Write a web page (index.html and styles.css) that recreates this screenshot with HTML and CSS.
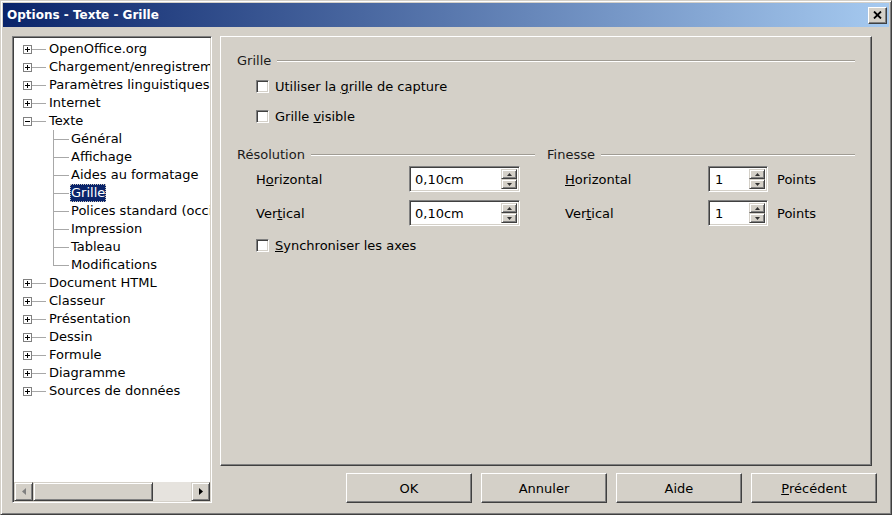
FILE: index.html
```html
<!DOCTYPE html>
<html lang="fr">
<head>
<meta charset="utf-8">
<title>Options - Texte - Grille</title>
<link rel="stylesheet" href="styles.css">
</head>
<body>
<div class="window">
  <div class="titlebar">
    <span class="title">Options - Texte - Grille</span>
    <span class="close"><svg width="9" height="8" viewBox="0 0 9 8"><path d="M1 0.5 L8 7.5 M8 0.5 L1 7.5" stroke="#000" stroke-width="1.8" fill="none"/></svg></span>
  </div>
  <div class="main">
    <div class="tree">
      <ul class="tree-list">
        <li class="node"><span class="exp plus"></span><span class="hl"></span><span class="lbl">OpenOffice.org</span></li>
        <li class="node"><span class="exp plus"></span><span class="hl"></span><span class="lbl">Chargement/enregistrement</span></li>
        <li class="node"><span class="exp plus"></span><span class="hl"></span><span class="lbl">Paramètres linguistiques</span></li>
        <li class="node"><span class="exp plus"></span><span class="hl"></span><span class="lbl">Internet</span></li>
        <li class="node"><span class="exp minus"></span><span class="hl"></span><span class="lbl">Texte</span></li>
        <li class="node child"><span class="vl"></span><span class="lbl">Général</span></li>
        <li class="node child"><span class="vl"></span><span class="lbl">Affichage</span></li>
        <li class="node child"><span class="vl"></span><span class="lbl">Aides au formatage</span></li>
        <li class="node child sel"><span class="vl"></span><span class="lbl">Grille</span></li>
        <li class="node child"><span class="vl"></span><span class="lbl">Polices standard (occidentales)</span></li>
        <li class="node child"><span class="vl"></span><span class="lbl">Impression</span></li>
        <li class="node child"><span class="vl"></span><span class="lbl">Tableau</span></li>
        <li class="node child"><span class="vl last"></span><span class="lbl">Modifications</span></li>
        <li class="node"><span class="exp plus"></span><span class="hl"></span><span class="lbl">Document HTML</span></li>
        <li class="node"><span class="exp plus"></span><span class="hl"></span><span class="lbl">Classeur</span></li>
        <li class="node"><span class="exp plus"></span><span class="hl"></span><span class="lbl">Présentation</span></li>
        <li class="node"><span class="exp plus"></span><span class="hl"></span><span class="lbl">Dessin</span></li>
        <li class="node"><span class="exp plus"></span><span class="hl"></span><span class="lbl">Formule</span></li>
        <li class="node"><span class="exp plus"></span><span class="hl"></span><span class="lbl">Diagramme</span></li>
        <li class="node"><span class="exp plus"></span><span class="hl"></span><span class="lbl">Sources de données</span></li>
      </ul>
      <div class="hscroll">
        <span class="sbtn"><svg width="4" height="7" viewBox="0 0 4 7"><path d="M4 0 L0 3.5 L4 7 Z" fill="#808080"/></svg></span>
        <span class="thumb"></span>
        <span class="track"></span>
        <span class="sbtn"><svg width="4" height="7" viewBox="0 0 4 7"><path d="M0 0 L4 3.5 L0 7 Z" fill="#000"/></svg></span>
      </div>
    </div>
    <div class="right">
      <div class="panel">
        <div class="group-head"><span>Grille</span><span class="rule"></span></div>
        <div class="check first"><span class="cb"></span><span>Utiliser la <u>g</u>rille de capture</span></div>
        <div class="check second"><span class="cb"></span><span>Grille <u>v</u>isible</span></div>
        <div class="cols">
          <div class="col">
            <div class="group-head"><span>Résolution</span><span class="rule short"></span></div>
            <div class="field r1">
              <span class="flbl">H<u>o</u>rizontal</span>
              <span class="spin wide"><span class="val">0,10cm</span><span class="arrows"><span class="arr"><svg width="5" height="3" viewBox="0 0 5 3"><path d="M0 3 L2.5 0 L5 3 Z" fill="#303030"/></svg></span><span class="arr"><svg width="5" height="3" viewBox="0 0 5 3"><path d="M0 0 L2.5 3 L5 0 Z" fill="#303030"/></svg></span></span></span>
            </div>
            <div class="field r2">
              <span class="flbl">Ver<u>t</u>ical</span>
              <span class="spin wide"><span class="val">0,10cm</span><span class="arrows"><span class="arr"><svg width="5" height="3" viewBox="0 0 5 3"><path d="M0 3 L2.5 0 L5 3 Z" fill="#303030"/></svg></span><span class="arr"><svg width="5" height="3" viewBox="0 0 5 3"><path d="M0 0 L2.5 3 L5 0 Z" fill="#303030"/></svg></span></span></span>
            </div>
            <div class="check sync"><span class="cb"></span><span><u>S</u>ynchroniser les axes</span></div>
          </div>
          <div class="col">
            <div class="group-head"><span>Finesse</span><span class="rule"></span></div>
            <div class="field fin r1">
              <span class="flbl"><u>H</u>orizontal</span>
              <span class="spin narrow"><span class="val">1</span><span class="arrows"><span class="arr"><svg width="5" height="3" viewBox="0 0 5 3"><path d="M0 3 L2.5 0 L5 3 Z" fill="#303030"/></svg></span><span class="arr"><svg width="5" height="3" viewBox="0 0 5 3"><path d="M0 0 L2.5 3 L5 0 Z" fill="#303030"/></svg></span></span></span>
              <span class="unit">Points</span>
            </div>
            <div class="field fin r2">
              <span class="flbl">Ver<u>t</u>ical</span>
              <span class="spin narrow"><span class="val">1</span><span class="arrows"><span class="arr"><svg width="5" height="3" viewBox="0 0 5 3"><path d="M0 3 L2.5 0 L5 3 Z" fill="#303030"/></svg></span><span class="arr"><svg width="5" height="3" viewBox="0 0 5 3"><path d="M0 0 L2.5 3 L5 0 Z" fill="#303030"/></svg></span></span></span>
              <span class="unit">Points</span>
            </div>
          </div>
        </div>
      </div>
      <div class="buttons">
        <span class="btn">OK</span>
        <span class="btn">Annuler</span>
        <span class="btn">Aide</span>
        <span class="btn"><u>P</u>récédent</span>
      </div>
    </div>
  </div>
</div>
</body>
</html>
```
FILE: styles.css
```css
html, body {
  margin: 0;
  padding: 0;
  background: #d4d0c8;
}
body {
  font-family: "DejaVu Sans", Verdana, sans-serif;
  font-size: 13px;
  color: #000;
}
.window {
  width: 892px;
  height: 515px;
  box-sizing: border-box;
  display: flex;
  flex-direction: column;
  background: #d4d0c8;
  border: 1px solid;
  border-color: #d4d0c8 #404040 #404040 #d4d0c8;
  box-shadow: inset 1px 1px #ffffff, inset -1px -1px #808080;
  padding: 2px;
}
.titlebar {
  height: 24px;
  flex: none;
  display: flex;
  align-items: center;
  justify-content: space-between;
  background: linear-gradient(to right, #0a246a, #a6caf0);
  padding: 0 2px 0 4px;
}
.title {
  color: #fff;
  font-weight: bold;
  font-size: 12px;
}
.close {
  width: 19px;
  height: 17px;
  box-sizing: border-box;
  background: #d4d0c8;
  border: 1px solid;
  border-color: #ffffff #404040 #404040 #ffffff;
  box-shadow: inset -1px -1px #808080;
  display: flex;
  align-items: center;
  justify-content: center;
}
.main {
  flex: 1;
  min-height: 0;
  display: flex;
  gap: 8px;
  padding: 9px 12px 9px 9px;
}
/* tree */
.tree {
  width: 200px;
  flex: none;
  box-sizing: border-box;
  background: #fff;
  border: 1px solid;
  border-color: #808080 #ffffff #ffffff #808080;
  box-shadow: inset 1px 1px #404040, inset -1px -1px #d4d0c8;
  padding: 1px;
  display: flex;
  flex-direction: column;
}
.tree-list {
  flex: 1;
  list-style: none;
  margin: 0;
  padding: 2px 0 0 0;
  overflow: hidden;
}
.node {
  display: flex;
  align-items: center;
  height: 18px;
  line-height: 18px;
  white-space: nowrap;
  padding-left: 9px;
}
.exp {
  flex: none;
  width: 9px;
  height: 9px;
  box-sizing: border-box;
  border: 1px solid #808080;
}
.exp.plus {
  background:
    linear-gradient(#000, #000) center / 5px 1px no-repeat,
    linear-gradient(#000, #000) center / 1px 5px no-repeat,
    #fff;
}
.exp.minus {
  background:
    linear-gradient(#000, #000) center / 5px 1px no-repeat,
    #fff;
}
.hl {
  flex: none;
  width: 14px;
  height: 1px;
  background: #a8a8a8;
  margin-right: 2px;
}
.vl {
  flex: none;
  width: 16px;
  height: 18px;
  margin-left: 30px;
  margin-right: 1px;
  background:
    linear-gradient(#a8a8a8, #a8a8a8) left top / 1px 100% no-repeat,
    linear-gradient(#a8a8a8, #a8a8a8) left 9px / 100% 1px no-repeat;
}
.vl.last {
  background:
    linear-gradient(#a8a8a8, #a8a8a8) left top / 1px 10px no-repeat,
    linear-gradient(#a8a8a8, #a8a8a8) left 9px / 100% 1px no-repeat;
}
.lbl {
  padding: 0 1px;
}
.sel .lbl {
  background: #0a246a;
  color: #fff;
  outline: 1px dotted #c8c4bc;
  outline-offset: -1px;
}
.hscroll {
  flex: none;
  display: flex;
  height: 19px;
  background: #e6e3de;
}
.sbtn, .thumb {
  flex: none;
  box-sizing: border-box;
  background: #d4d0c8;
  border: 1px solid;
  border-color: #d4d0c8 #404040 #404040 #d4d0c8;
  box-shadow: inset 1px 1px #ffffff, inset -1px -1px #808080;
}
.sbtn {
  width: 19px;
  display: flex;
  align-items: center;
  justify-content: center;
}
.thumb {
  width: 120px;
}
.track {
  flex: 1;
}
/* right column */
.right {
  flex: 1;
  display: flex;
  flex-direction: column;
  gap: 7px;
}
.panel {
  height: 430px;
  flex: none;
  margin-right: 5px;
  box-sizing: border-box;
  border: 1px solid;
  border-color: #ffffff #404040 #404040 #ffffff;
  box-shadow: inset -1px -1px #808080;
  padding: 16px 16px 0 16px;
}
.group-head {
  display: flex;
  align-items: center;
  height: 16px;
  line-height: 16px;
  color: #1a1a1a;
}
.rule {
  flex: 1;
  height: 0;
  border-top: 1px solid #a09c94;
  border-bottom: 1px solid #ffffff;
  margin-left: 6px;
}
.check {
  display: flex;
  align-items: center;
  gap: 6px;
  height: 20px;
  margin-left: 19px;
}
.check.first { margin-top: 7px; }
.check.second { margin-top: 10px; }
.check.sync { margin-top: 9px; }
.cb {
  flex: none;
  width: 13px;
  height: 13px;
  box-sizing: border-box;
  background: #fff;
  border: 1px solid;
  border-color: #808080 #ffffff #ffffff #808080;
  box-shadow: inset 1px 1px #404040, inset -1px -1px #d4d0c8;
}
.cols {
  display: grid;
  grid-template-columns: 298px 1fr;
  column-gap: 12px;
  margin-top: 21px;
}
.field {
  display: flex;
  align-items: center;
  height: 26px;
  margin-left: 19px;
}
.field.r1 { margin-top: 3px; }
.field.r2 { margin-top: 8px; }
.field.fin { margin-left: 18px; }
.flbl {
  width: 153px;
  flex: none;
}
.fin .flbl {
  width: 143px;
}
.spin {
  flex: none;
  height: 26px;
  box-sizing: border-box;
  background: #fff;
  border: 1px solid;
  border-color: #808080 #ffffff #ffffff #808080;
  box-shadow: inset 1px 1px #404040, inset -1px -1px #d4d0c8;
  padding: 2px;
  display: flex;
}
.spin.wide { width: 111px; }
.spin.narrow { width: 60px; }
.val {
  flex: 1;
  padding-left: 3px;
  line-height: 22px;
}
.narrow .val { padding-left: 4px; }
.arrows {
  width: 16px;
  display: flex;
  flex-direction: column;
}
.arr {
  flex: 1;
  box-sizing: border-box;
  background: #d4d0c8;
  border: 1px solid;
  border-color: #d4d0c8 #404040 #404040 #d4d0c8;
  box-shadow: inset 1px 1px #ffffff, inset -1px -1px #808080;
  display: flex;
  align-items: center;
  justify-content: center;
}
.unit {
  margin-left: 9px;
}
.buttons {
  display: flex;
  justify-content: flex-end;
  gap: 9px;
  height: 30px;
}
.btn {
  width: 126px;
  height: 30px;
  box-sizing: border-box;
  background: #d4d0c8;
  border: 1px solid;
  border-color: #ffffff #404040 #404040 #ffffff;
  box-shadow: inset -1px -1px #808080;
  display: flex;
  align-items: center;
  justify-content: center;
}
```
